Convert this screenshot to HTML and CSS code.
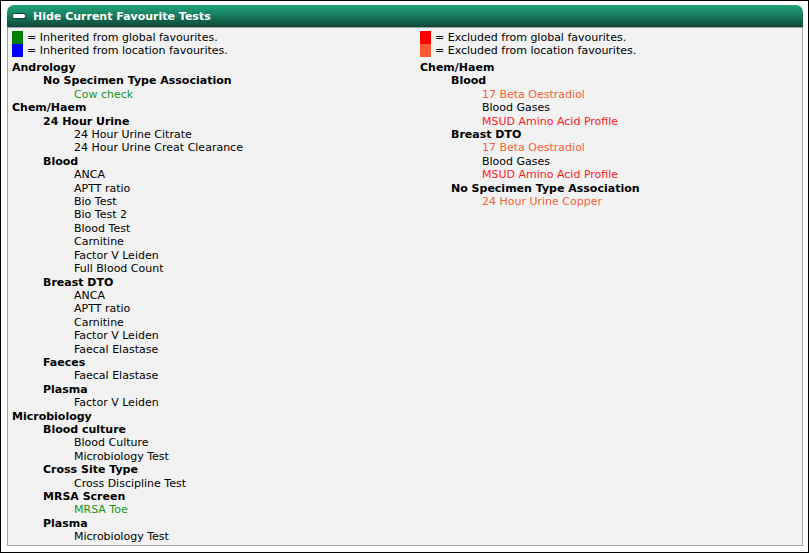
FILE: index.html
```html
<!DOCTYPE html>
<html lang="en">
<head>
    <meta charset="UTF-8">
    <title>Current Favourite Tests</title>
    <link rel="stylesheet" href="styles.css">
</head>
<body>
    <div class="frame">
        <div class="panel">
            <div class="panel-header">
                <svg class="toggle" width="14" height="6" viewBox="0 0 14 6">
                    <rect x="0.5" y="0.5" width="13" height="5" rx="2" fill="#fff" stroke="#0b3a2c"/>
                </svg>
                <span>Hide Current Favourite Tests</span>
            </div>
            <div class="panel-body">
                <div class="column">
                    <div class="legend">
                        <div class="legend-row"><span class="swatch global-in"></span>= Inherited from global favourites.</div>
                        <div class="legend-row"><span class="swatch location-in"></span>= Inherited from location favourites.</div>
                    </div>
                    <div class="tree">
                        <div class="discipline">Andrology</div>
                        <div class="specimen">No Specimen Type Association</div>
                        <div class="test inherit-global">Cow check</div>
                        <div class="discipline">Chem/Haem</div>
                        <div class="specimen">24 Hour Urine</div>
                        <div class="test">24 Hour Urine Citrate</div>
                        <div class="test">24 Hour Urine Creat Clearance</div>
                        <div class="specimen">Blood</div>
                        <div class="test">ANCA</div>
                        <div class="test">APTT ratio</div>
                        <div class="test">Bio Test</div>
                        <div class="test">Bio Test 2</div>
                        <div class="test">Blood Test</div>
                        <div class="test">Carnitine</div>
                        <div class="test">Factor V Leiden</div>
                        <div class="test">Full Blood Count</div>
                        <div class="specimen">Breast DTO</div>
                        <div class="test">ANCA</div>
                        <div class="test">APTT ratio</div>
                        <div class="test">Carnitine</div>
                        <div class="test">Factor V Leiden</div>
                        <div class="test">Faecal Elastase</div>
                        <div class="specimen">Faeces</div>
                        <div class="test">Faecal Elastase</div>
                        <div class="specimen">Plasma</div>
                        <div class="test">Factor V Leiden</div>
                        <div class="discipline">Microbiology</div>
                        <div class="specimen">Blood culture</div>
                        <div class="test">Blood Culture</div>
                        <div class="test">Microbiology Test</div>
                        <div class="specimen">Cross Site Type</div>
                        <div class="test">Cross Discipline Test</div>
                        <div class="specimen">MRSA Screen</div>
                        <div class="test inherit-global">MRSA Toe</div>
                        <div class="specimen">Plasma</div>
                        <div class="test">Microbiology Test</div>
                    </div>
                </div>
                <div class="column">
                    <div class="legend">
                        <div class="legend-row"><span class="swatch global-ex"></span>= Excluded from global favourites.</div>
                        <div class="legend-row"><span class="swatch location-ex"></span>= Excluded from location favourites.</div>
                    </div>
                    <div class="tree">
                        <div class="discipline">Chem/Haem</div>
                        <div class="specimen">Blood</div>
                        <div class="test exclude-location">17 Beta Oestradiol</div>
                        <div class="test">Blood Gases</div>
                        <div class="test exclude-global">MSUD Amino Acid Profile</div>
                        <div class="specimen">Breast DTO</div>
                        <div class="test exclude-location">17 Beta Oestradiol</div>
                        <div class="test">Blood Gases</div>
                        <div class="test exclude-global">MSUD Amino Acid Profile</div>
                        <div class="specimen">No Specimen Type Association</div>
                        <div class="test exclude-location">24 Hour Urine Copper</div>
                    </div>
                </div>
            </div>
        </div>
    </div>
</body>
</html>
```

FILE: styles.css
```css
html, body {
    margin: 0;
    padding: 0;
    background-color: #fff;
}
body {
    font-family: "DejaVu Sans", Verdana, sans-serif;
    font-size: 11px;
    color: #000;
}
.frame {
    width: 809px;
    height: 553px;
    box-sizing: border-box;
    border: 1px solid #000;
    padding: 4px 6px 6px 6px;
}
.panel {
    width: 796px;
    height: 541px;
    display: flex;
    flex-direction: column;
}
.panel-header {
    height: 22px;
    display: flex;
    align-items: center;
    gap: 7px;
    padding-left: 5px;
    border-radius: 7px 7px 0 0;
    background: linear-gradient(to bottom, #22a27e 0%, #17805f 45%, #0c4636 100%);
    color: #fff;
    font-weight: bold;
}
.toggle {
    display: block;
}
.panel-body {
    flex: 1;
    display: grid;
    grid-template-columns: 408px 1fr;
    padding: 3px 4px 1px 4px;
    border: 1px solid #a3a3a3;
    background-color: #f2f2f2;
}
.legend {
    margin-bottom: 4px;
}
.legend-row {
    display: flex;
    align-items: center;
    height: 13px;
    gap: 4px;
    white-space: nowrap;
}
.swatch {
    width: 11px;
    height: 13px;
}
.global-in { background-color: #008000; }
.location-in { background-color: #0000ff; }
.global-ex { background-color: #ff0000; }
.location-ex { background-color: #ff5a36; }
.tree div {
    line-height: 13.4px;
    white-space: nowrap;
}
.discipline {
    font-weight: bold;
}
.specimen {
    font-weight: bold;
    padding-left: 31px;
}
.test {
    padding-left: 62px;
}
.inherit-global { color: #199619; }
.exclude-global { color: #ff1a1a; }
.exclude-location { color: #fa5f36; }
```
